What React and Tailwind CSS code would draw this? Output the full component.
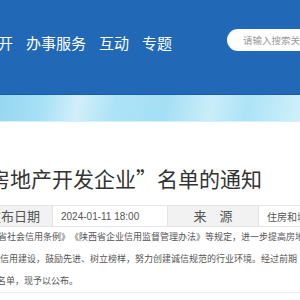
import React from 'react';

const cjk = "font-['Noto_Sans_CJK_SC','Noto_Sans',sans-serif]";

const navItems = ['办事服务', '互动', '专题'];

const App = () => {
  return (
    <div className={`w-full h-[300px] overflow-hidden bg-white ${cjk}`}>
      {/* 顶部导航 */}
      <header className="h-[95px] bg-[#2169b6] border-b border-[#1b5da4] flex items-start">
        <nav className="flex items-center gap-[13px] mt-[35px] ml-[-2px] text-[15px] leading-[16px] text-white whitespace-nowrap">
          <span>开</span>
          {navItems.map((item) => (
            <span key={item}>{item}</span>
          ))}
        </nav>
        <div className="ml-[55px] mt-[29px] h-[22px] w-[120px] shrink-0 rounded-l-full bg-white flex items-center pl-[16px]">
          <span className="text-[9.5px] text-[#9a9a9a] whitespace-nowrap">请输入搜索关键字</span>
        </div>
      </header>

      {/* 天空横条 */}
      <div className="h-[27px] border-b border-[#d3f1fb] bg-[linear-gradient(100deg,#96d7f0_0%,#a6e0f5_14%,#d2effa_26%,#aee3f6_38%,#a4dff5_55%,#cbedfa_70%,#ace3f6_82%,#d0f0fb_100%)]" />

      {/* 标题 */}
      <h1 className="mt-[41px] ml-[-11px] text-[21px] leading-[30px] text-[#333] whitespace-nowrap">
        房地产开发企业”名单的通知
      </h1>

      {/* 信息表 */}
      <div className="mt-[12px] flex border-y border-[#e4e4e4] h-[22px] text-[#555] whitespace-nowrap">
        <div className="w-[90px] ml-[-38px] shrink-0 bg-[#f2f2f2] flex items-center justify-end pr-[12px] text-[13px]">发布日期</div>
        <div className="w-[116px] shrink-0 border-x border-[#e4e4e4] flex items-center pl-[8px] text-[10px] font-['Liberation_Sans',sans-serif]">
          2024-01-11 18:00
        </div>
        <div className="w-[90px] shrink-0 bg-[#f2f2f2] flex items-center justify-center text-[13px]">来　源</div>
        <div className="shrink-0 border-l border-[#e4e4e4] flex items-center pl-[8px] text-[10px]">住房和城乡建设厅</div>
      </div>

      {/* 正文 */}
      <div className="mt-[-1px] text-[9px] leading-[22px] text-[#555] whitespace-nowrap border-b border-[#ebebeb] [text-spacing-trim:space-all]">
        <p className="ml-[-2px]">省社会信用条例》《陕西省企业信用监督管理办法》等规定，进一步提高房地产</p>
        <p>信用建设，鼓励先进、树立榜样，努力创建诚信规范的行业环境。经过前期</p>
        <p className="ml-[-3px]">名单，现予以公布。</p>
      </div>
    </div>
  );
};

export default App;
